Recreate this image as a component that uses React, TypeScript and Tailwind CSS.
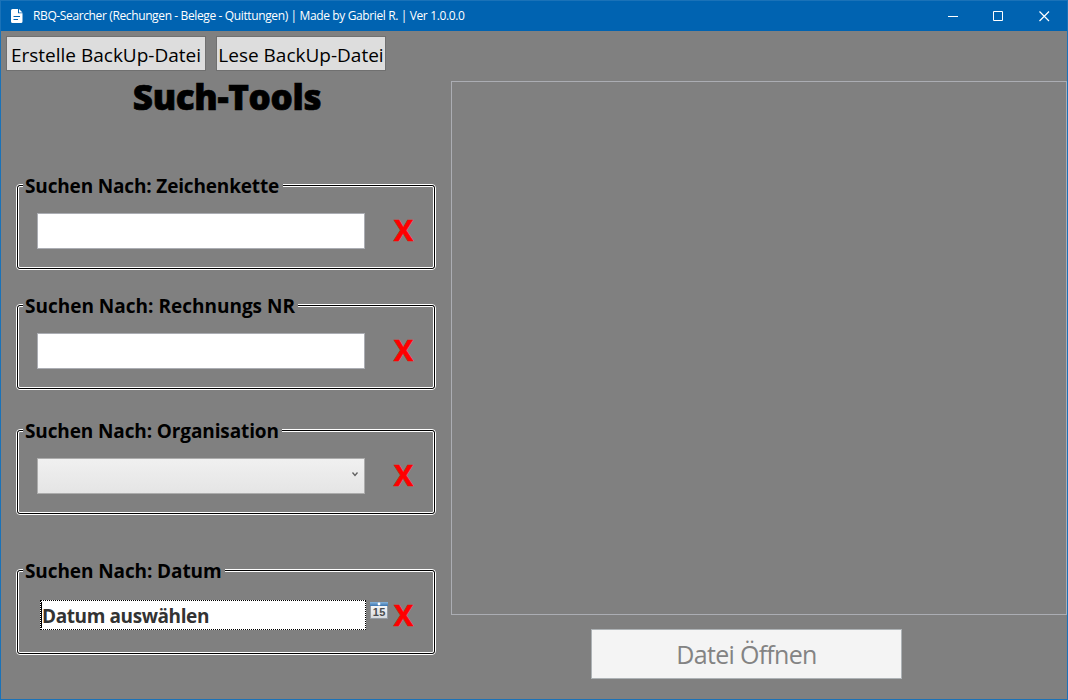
import type { ReactNode } from 'react';

function ClearButton() {
  return (
    <button className="-mt-0.5 flex h-9 w-[22px] items-center justify-center text-[29px] leading-none font-bold text-[#ff0000] [-webkit-text-stroke:0.6px_#ff0000]">
      X
    </button>
  );
}

function GroupBox({ title, spacing, children }: { title: string; spacing: string; children: ReactNode }) {
  return (
    <section className="h-[86px] w-[420px] rounded-[4px] border border-white">
      <div className="h-full rounded-[3px] border border-black">
        <div className="h-full rounded-[2px] border border-white">
          <h2 className={`-mt-[15px] ml-1 h-7 w-fit bg-[#808080] pr-[3.500px] pl-[2px] text-[19px] leading-7 font-bold whitespace-nowrap ${spacing}`}>
            {title}
          </h2>
          {children}
        </div>
      </div>
    </section>
  );
}

function TextField() {
  return (
    <div className="mt-[13px] flex pl-[18px]">
      <input className="h-9 w-[328px] border border-[#abadb3] bg-white outline-none" />
      <div className="ml-[27.500px]"><ClearButton /></div>
    </div>
  );
}

function CalendarIcon() {
  return (
    <svg width="18" height="18" viewBox="0 0 18 18">
      <defs>
        <linearGradient id="page" x2="0" y2="1">
          <stop stopColor="#ffffff" />
          <stop offset="1" stopColor="#d4d8dc" />
        </linearGradient>
        <linearGradient id="band" x2="0" y2="1">
          <stop stopColor="#86b4dc" />
          <stop offset="1" stopColor="#3c75b0" />
        </linearGradient>
      </defs>
      <rect x="0.5" y="0.5" width="17" height="16" fill="url(#page)" stroke="#939ba3" />
      <rect width="18" height="4" fill="url(#band)" />
      <circle cx="9" cy="2" r="1.4" fill="white" />
      <text x="9.300" y="14" textAnchor="middle" fontSize="11" letterSpacing="0.500" fontWeight="700" fill="#4a4d50" fontFamily="Liberation Sans, sans-serif">15</text>
    </svg>
  );
}

export default function App() {
  return (
    <div className="flex h-[700px] w-[1068px] flex-col overflow-hidden border border-[#1a72b8] bg-[#808080] font-['Open_Sans','Noto_Sans',sans-serif] text-black">
      <header className="flex h-[30px] shrink-0 items-center bg-[#0063b1] text-white">
        <svg className="ml-[10px]" width="12" height="14" viewBox="0 0 12 14">
          <path d="M1.5 0H7v4.2h4.5v8.3a1.5 1.5 0 0 1-1.5 1.5H1.5A1.5 1.5 0 0 1 0 12.500v-11A1.500 1.500 0 0 1 1.500 0Z" fill="white" />
          <path d="M8 0 11.500 3.400H8Z" fill="white" />
          <path d="M2.500 7.500H9M2.500 10.500H7" stroke="#0063b1" />
        </svg>
        <span className="ml-[10px] text-[12px] tracking-[-0.375px] whitespace-nowrap">
          RBQ-Searcher (Rechungen - Belege - Quittungen) | Made by Gabriel R. | Ver 1.0.0.0
        </span>
        <div className="mr-[17px] ml-auto flex gap-[35px]">
          <svg width="11" height="11" viewBox="0 0 11 11"><path d="M1 5.500H11" stroke="white" /></svg>
          <svg width="11" height="11" viewBox="0 0 11 11"><path d="M.5.5h9v9h-9Z" stroke="white" fill="none" /></svg>
          <svg width="11" height="11" viewBox="0 0 11 11"><path d="m.5.5 9.500 9.500m0-9.500L.5 10" stroke="white" strokeWidth="1.200" fill="none" /></svg>
        </div>
      </header>
      <main className="flex flex-1">
        <div className="w-[450px] shrink-0">
          <div className="flex gap-[10px] pt-[5px] pl-[5px]">
            <button className="flex h-[35px] w-[200px] items-center justify-center border border-[#707070] bg-[#dddddd] pt-[4px] text-[19px] whitespace-nowrap">Erstelle BackUp-Datei</button>
            <button className="flex h-[35px] w-[170px] items-center justify-center border border-[#707070] bg-[#dddddd] pt-[4px] text-[19px] whitespace-nowrap">Lese BackUp-Datei</button>
          </div>
          <h1 className="mt-[2px] h-12 pl-[2px] text-center text-[35px] leading-[48px] font-extrabold tracking-[-0.35px] [-webkit-text-stroke:0.7px_#000000]">Such-Tools</h1>
          <div className="flex flex-col pt-[63px] pl-[15px]">
            <GroupBox title="Suchen Nach: Zeichenkette" spacing="tracking-[-0.16px]"><TextField /></GroupBox>
            <div className="mt-[34px]"><GroupBox title="Suchen Nach: Rechnungs NR" spacing="tracking-normal"><TextField /></GroupBox></div>
            <div className="mt-[39px]">
              <GroupBox title="Suchen Nach: Organisation" spacing="tracking-[-0.12px]">
                <div className="mt-[13px] flex pl-[18px]">
                  <button className="flex h-9 w-[328px] items-center justify-end border border-[#acacac] bg-linear-to-b from-[#f0f0f0] to-[#e5e5e5] pr-[6px] pb-[3px]">
                    <svg width="6" height="5" viewBox="0 0 6 5"><path d="m.5.5 2.500 3 2.500-3" fill="none" stroke="#606060" strokeWidth="1.300" /></svg>
                  </button>
                  <div className="ml-[27.500px]"><ClearButton /></div>
                </div>
              </GroupBox>
            </div>
            <div className="mt-[54px]">
              <GroupBox title="Suchen Nach: Datum" spacing="tracking-[-0.1px]">
                <div className="mt-[13px] flex pl-[21px]">
                  <div className="mt-[2px] flex h-[30px] w-[326px] items-center border border-dotted border-black bg-white text-[19px] font-bold tracking-[-0.4px] whitespace-nowrap text-[#333333]">
                    <span className="h-[26px] w-px shrink-0 bg-black" />
                    <span className="pt-[2px]">Datum auswählen</span>
                  </div>
                  <div className="mt-[4px] ml-1"><CalendarIcon /></div>
                  <div className="ml-[4.500px]"><ClearButton /></div>
                </div>
              </GroupBox>
            </div>
          </div>
        </div>
        <div className="flex flex-1 flex-col items-center pt-[50px]">
          <div className="h-[534px] w-full border border-[#abadb3]" />
          <button className="mt-[14px] mr-[25px] h-[50px] w-[311px] border border-[#adb2b5] bg-[#f4f4f4] pt-px text-[25px] tracking-[-0.7px] text-[#838383]">Datei Öffnen</button>
        </div>
      </main>
    </div>
  );
}
